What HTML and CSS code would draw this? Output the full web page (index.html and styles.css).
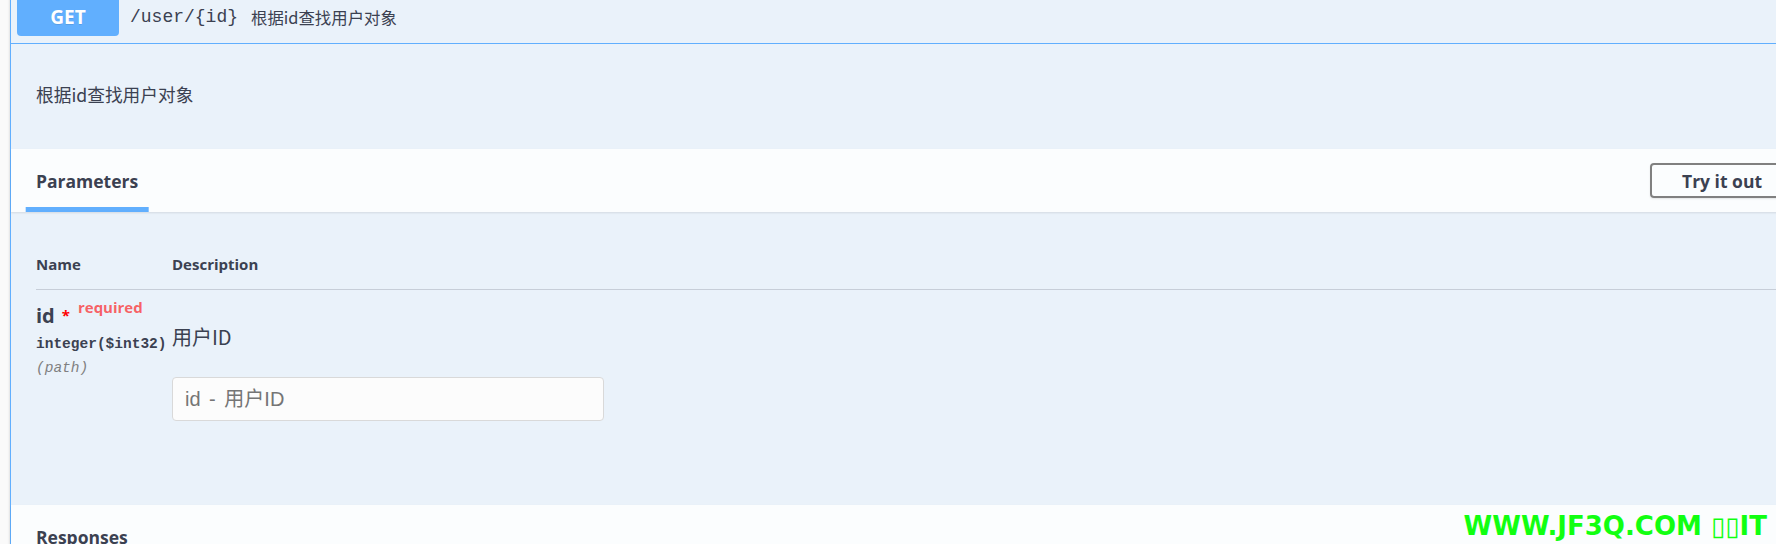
FILE: index.html
```html
<!DOCTYPE html>
<html lang="zh-CN">
<head>
<meta charset="utf-8">
<title>Swagger UI</title>
<link rel="stylesheet" href="styles.css">
</head>
<body>
<div class="page">
  <div class="opblock">
    <div class="summary">
      <span class="method">GET</span>
      <span class="path">/user/{id}</span>
      <span class="summary-desc">根据id查找用户对象</span>
    </div>
    <div class="description">根据id查找用户对象</div>
    <div class="section-header">
      <div class="tab"><h4 class="section-title">Parameters</h4></div>
      <button class="try-btn" type="button">Try it out</button>
    </div>
    <div class="table-container">
      <div class="params-head">
        <div class="head-cell">Name</div>
        <div class="head-cell">Description</div>
      </div>
      <div class="param-row">
        <div class="col-name">
          <div class="param-name">id<span class="star">*</span><span class="req">required</span></div>
          <div class="param-type">integer($int32)</div>
          <div class="param-in">(path)</div>
        </div>
        <div class="col-desc">
          <p class="param-desc">用户ID</p>
          <input class="param-input" type="text" placeholder="id - 用户ID">
        </div>
      </div>
    </div>
    <div class="section-header">
      <h4 class="section-title">Responses</h4>
    </div>
  </div>
</div>
<div class="watermark">WWW.JF3Q.COM <span class="tofu">▯▯</span>IT</div>
</body>
</html>
```

FILE: styles.css
```css
* { box-sizing: border-box; }
html, body { margin: 0; padding: 0; }
body {
  width: 1776px;
  height: 544px;
  overflow: hidden;
  position: relative;
  background: #fafafa;
  font-family: "Open Sans", "Noto Sans CJK SC", sans-serif;
  color: #3b4151;
}
.page {
  width: 1830px;
  padding-left: 10px;
  margin-top: -11px;
}
.opblock {
  width: 1810px;
  border: 1px solid #61affe;
  border-radius: 5px;
  background: rgba(97, 175, 254, 0.1);
  box-shadow: 0 0 3px rgba(0, 0, 0, 0.19);
}
.summary {
  display: flex;
  align-items: center;
  padding: 7px 6px;
  border-bottom: 1px solid #61affe;
}
.method {
  width: 102px;
  height: 39px;
  display: flex;
  align-items: center;
  justify-content: center;
  background: #61affe;
  color: #fff;
  font-weight: 700;
  font-size: 19px;
  border-radius: 4px;
  text-shadow: 0 1px 0 rgba(0, 0, 0, 0.1);
}
.path {
  font-family: "Liberation Mono", monospace;
  font-size: 18px;
  padding: 0 13px 0 11px;
}
.summary-desc {
  font-family: "Noto Sans CJK SC", sans-serif;
  font-size: 16.4px;
}
.description {
  padding: 38px 25px 43px;
  font-family: "Noto Sans CJK SC", sans-serif;
  font-size: 17.7px;
  line-height: 24px;
}
.section-header {
  height: 63px;
  display: flex;
  align-items: center;
  justify-content: space-between;
  padding: 0 25px;
  background: rgba(255, 255, 255, 0.8);
  box-shadow: 0 1px 2px rgba(0, 0, 0, 0.1);
}
.tab {
  align-self: stretch;
  display: flex;
  align-items: center;
  position: relative;
}
.tab::after {
  content: "";
  position: absolute;
  left: 50%;
  bottom: 0;
  transform: translateX(-50%);
  width: 120%;
  height: 5px;
  background: #61affe;
}
.section-title {
  margin: 0;
  font-size: 17.5px;
  font-weight: 700;
  line-height: 24px;
}
.try-btn {
  width: 144px;
  height: 35px;
  padding: 0;
  border: 2px solid #808080;
  border-radius: 4px;
  background: transparent;
  font-family: "Open Sans", sans-serif;
  font-weight: 700;
  font-size: 17.5px;
  color: #3b4151;
  box-shadow: 0 1px 2px rgba(0, 0, 0, 0.1);
}
.table-container {
  height: 293px;
  padding: 27px 25px 0;
}
.params-head {
  display: grid;
  grid-template-columns: 136px 1fr;
  padding: 15px 0 15px;
  border-bottom: 1px solid rgba(59, 65, 81, 0.2);
}
.head-cell {
  font-size: 15px;
  font-weight: 700;
  line-height: 20px;
}
.param-row {
  display: grid;
  grid-template-columns: 136px 1fr;
}
.param-name {
  padding-top: 12px;
  font-size: 20px;
  font-weight: 700;
  line-height: 27px;
  white-space: nowrap;
}
.star {
  color: #ff0000;
  font-size: 15px;
  line-height: 0;
  padding: 0 8px 0 7px;
  vertical-align: 2px;
}
.req {
  color: rgba(255, 0, 0, 0.62);
  font-size: 15px;
  line-height: 0;
  vertical-align: 10px;
}
.param-type {
  margin-top: 5px;
  font-family: "Liberation Mono", monospace;
  font-size: 14.5px;
  font-weight: 700;
  line-height: 20px;
  white-space: nowrap;
}
.param-in {
  margin-top: 4px;
  font-family: "Liberation Mono", monospace;
  font-size: 14.5px;
  font-style: italic;
  color: #808080;
  line-height: 20px;
}
.param-desc {
  margin: 33px 0 0;
  font-family: "Noto Sans CJK SC", sans-serif;
  font-size: 20px;
  line-height: 28px;
}
.param-input {
  display: block;
  margin-top: 26px;
  width: 432px;
  height: 44px;
  border: 1px solid #d9d9d9;
  border-radius: 4px;
  background: #fcfcfc;
  padding: 0 12px;
  font-family: "Liberation Sans", "Noto Sans CJK SC", sans-serif;
  font-size: 20px;
  word-spacing: 3px;
  color: #3b4151;
}
.param-input::placeholder { color: #757575; }
.watermark {
  position: absolute;
  right: 9px;
  top: 513px;
  font-family: "DejaVu Sans", sans-serif;
  font-weight: 700;
  font-size: 26px;
  line-height: 26px;
  color: #11ff11;
  white-space: nowrap;
}
.tofu {
  font-weight: 400;
}
```
